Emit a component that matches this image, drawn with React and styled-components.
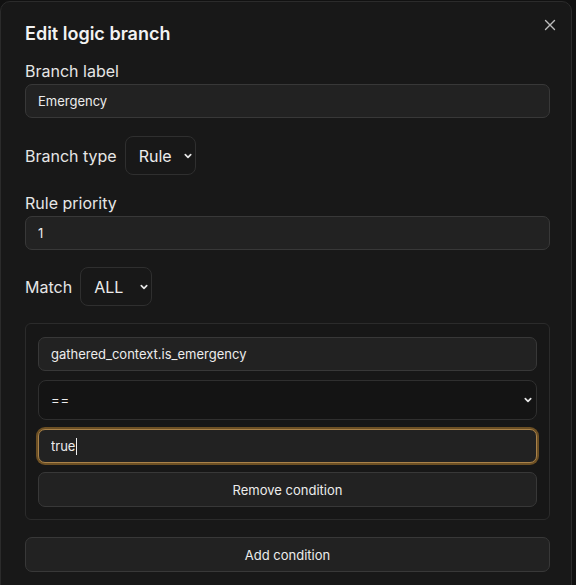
import styled, { createGlobalStyle } from "styled-components";

const GlobalStyle = createGlobalStyle`
  html, body {
    margin: 0;
    padding: 0;
    background: #111111;
  }
  body {
    font-family: Inter, "Noto Sans", "Liberation Sans", sans-serif;
    color: #ededed;
  }
  * { box-sizing: border-box; }
`;

export default function App() {
    return (
        <>
            <GlobalStyle />
            <Dialog>
                <CloseButton aria-label="Close">
                    <svg width="12" height="12" viewBox="0 0 12 12" fill="none">
                        <path d="M1.5 1.5l9 9M10.5 1.5l-9 9" stroke="#bdbdbd" strokeWidth="1.4" strokeLinecap="round" />
                    </svg>
                </CloseButton>

                <Title>Edit logic branch</Title>

                <Field>
                    <Label>Branch label</Label>
                    <Input defaultValue="Emergency" />
                </Field>

                <InlineField $spaced>
                    <Label>Branch type</Label>
                    <SelectWrap>
                        <Select $compact defaultValue="rule">
                            <option value="rule">Rule</option>
                            <option value="llm">LLM</option>
                        </Select>
                        <Chevron />
                    </SelectWrap>
                </InlineField>

                <Field>
                    <Label>Rule priority</Label>
                    <Input defaultValue="1" />
                </Field>

                <InlineField>
                    <Label>Match</Label>
                    <SelectWrap>
                        <Select $compact defaultValue="all">
                            <option value="all">ALL</option>
                            <option value="any">ANY</option>
                        </Select>
                        <Chevron />
                    </SelectWrap>
                </InlineField>

                <ConditionCard>
                    <Input defaultValue="gathered_context.is_emergency" />
                    <SelectWrap $block>
                        <Select $dark defaultValue="eq">
                            <option value="eq">==</option>
                            <option value="neq">!=</option>
                        </Select>
                        <Chevron $block />
                    </SelectWrap>
                    <FocusWrap>
                        <Input $focused defaultValue="true" />
                        {/* caret drawn over the field, the page is a still */}
                        <Caret />
                    </FocusWrap>
                    <Button>Remove condition</Button>
                </ConditionCard>

                <Button>Add condition</Button>
            </Dialog>
        </>
    );
}

function Chevron({ $block }) {
    return (
        <ChevronIcon $block={$block} width="10" height="10" viewBox="0 0 10 10" fill="none">
            <path d="M2.3 3.7l2.7 2.7 2.7-2.7" stroke="#e5e5e5" strokeWidth="1.7" strokeLinecap="round" strokeLinejoin="round" />
        </ChevronIcon>
    );
}

const Dialog = styled.div`
  position: relative;
  width: 572px;
  min-height: 600px;
  margin-top: 1px;
  background: #181818;
  border: 1px solid #2b2b2b;
  border-radius: 10px;
  padding: 19px 21px 20px 24px;
  display: flex;
  flex-direction: column;
  gap: 17px;
`;

const CloseButton = styled.button`
  position: absolute;
  top: 16px;
  right: 14px;
  width: 14px;
  height: 14px;
  padding: 0;
  border: none;
  background: transparent;
  display: flex;
  align-items: center;
  justify-content: center;
  cursor: pointer;
`;

const Title = styled.h2`
  margin: 0 0 -3px;
  font-size: 18px;
  line-height: 26px;
  font-weight: 600;
  color: #f2f2f2;
`;

const Field = styled.div`
  display: flex;
  flex-direction: column;
  gap: 3px;
`;

const InlineField = styled.div`
  display: flex;
  align-items: center;
  gap: 8px;
  margin: ${(p) => (p.$spaced ? "1px 0 1px" : "0")};
`;

const Label = styled.label`
  font-size: 16px;
  line-height: 20px;
  color: #e6e6e6;
`;

const Input = styled.input`
  width: 100%;
  height: 34px;
  padding: 0 12px;
  font-family: inherit;
  font-size: 13px;
  color: #ececec;
  background: #222222;
  border: 1px solid ${(p) => (p.$focused ? "#a9824a" : "#383838")};
  border-radius: 7px;
  outline: none;
  box-shadow: ${(p) => (p.$focused ? "0 0 0 2px #6d5024" : "none")};
`;

const FocusWrap = styled.div`
  position: relative;
`;

const Caret = styled.span`
  position: absolute;
  left: 38px;
  top: 9px;
  width: 1px;
  height: 17px;
  background: #f0f0f0;
`;

const SelectWrap = styled.div`
  position: relative;
  display: ${(p) => (p.$block ? "block" : "inline-block")};
  width: ${(p) => (p.$block ? "100%" : "auto")};
`;

const Select = styled.select`
  appearance: none;
  -webkit-appearance: none;
  display: block;
  width: ${(p) => (p.$compact ? "auto" : "100%")};
  height: ${(p) => (p.$compact ? "39px" : "40px")};
  padding: ${(p) => (p.$compact ? "0 23px 0 13px" : "0 30px 0 12px")};
  font-family: inherit;
  font-size: ${(p) => (p.$compact ? "16px" : "13px")};
  letter-spacing: ${(p) => (p.$compact ? "0" : "0.06em")};
  color: #ececec;
  background: ${(p) => (p.$dark ? "#141414" : "#181818")};
  border: 1px solid #2f2f2f;
  border-radius: 8px;
  outline: none;
  cursor: pointer;
`;

const ChevronIcon = styled.svg`
  position: absolute;
  right: ${(p) => (p.$block ? "4px" : "3px")};
  top: 50%;
  transform: translateY(-50%);
  pointer-events: none;
`;

const ConditionCard = styled.div`
  display: flex;
  flex-direction: column;
  gap: 9px;
  padding: 13px 12px 12px;
  background: #171717;
  border: 1px solid #2b2b2b;
  border-radius: 6px;
`;

const Button = styled.button`
  width: 100%;
  height: 35px;
  font-family: inherit;
  font-size: 13px;
  color: #ececec;
  background: #222222;
  border: 1px solid #383838;
  border-radius: 7px;
  cursor: pointer;
`;
